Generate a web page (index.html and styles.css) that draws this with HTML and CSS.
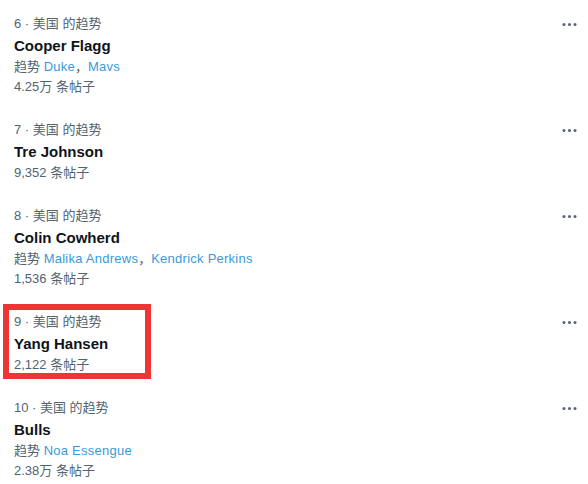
FILE: index.html
```html
<!DOCTYPE html>
<html lang="zh-CN">
<head>
  <meta charset="UTF-8">
  <title>趋势</title>
  <link rel="stylesheet" href="styles.css">
</head>
<body>

<div class="trend-list">
  <!-- 6 -->
  <div class="trend">
    <div class="trend-body">
      <div class="meta">6 · 美国 的趋势</div>
      <div class="name">Cooper Flagg</div>
      <div class="related">趋势 <a>Duke</a>，<a>Mavs</a></div>
      <div class="count">4.25万 条帖子</div>
    </div>
    <button class="more"><svg viewBox="0 0 24 24"><path d="M3 12c0-1.1.9-2 2-2s2 .9 2 2-.9 2-2 2-2-.9-2-2zm9 2c1.1 0 2-.9 2-2s-.9-2-2-2-2 .9-2 2 .9 2 2 2zm7 0c1.1 0 2-.9 2-2s-.9-2-2-2-2 .9-2 2 .9 2 2 2z"/></svg></button>
  </div>

  <!-- 7 -->
  <div class="trend">
    <div class="trend-body">
      <div class="meta">7 · 美国 的趋势</div>
      <div class="name">Tre Johnson</div>
      <div class="count">9,352 条帖子</div>
    </div>
    <button class="more"><svg viewBox="0 0 24 24"><path d="M3 12c0-1.1.9-2 2-2s2 .9 2 2-.9 2-2 2-2-.9-2-2zm9 2c1.1 0 2-.9 2-2s-.9-2-2-2-2 .9-2 2 .9 2 2 2zm7 0c1.1 0 2-.9 2-2s-.9-2-2-2-2 .9-2 2 .9 2 2 2z"/></svg></button>
  </div>

  <!-- 8 -->
  <div class="trend">
    <div class="trend-body">
      <div class="meta">8 · 美国 的趋势</div>
      <div class="name">Colin Cowherd</div>
      <div class="related">趋势 <a>Malika Andrews</a>，<a>Kendrick Perkins</a></div>
      <div class="count">1,536 条帖子</div>
    </div>
    <button class="more"><svg viewBox="0 0 24 24"><path d="M3 12c0-1.1.9-2 2-2s2 .9 2 2-.9 2-2 2-2-.9-2-2zm9 2c1.1 0 2-.9 2-2s-.9-2-2-2-2 .9-2 2 .9 2 2 2zm7 0c1.1 0 2-.9 2-2s-.9-2-2-2-2 .9-2 2 .9 2 2 2z"/></svg></button>
  </div>

  <!-- 9, marked -->
  <div class="trend marked">
    <div class="trend-body">
      <div class="meta">9 · 美国 的趋势</div>
      <div class="name">Yang Hansen</div>
      <div class="count">2,122 条帖子</div>
    </div>
    <button class="more"><svg viewBox="0 0 24 24"><path d="M3 12c0-1.1.9-2 2-2s2 .9 2 2-.9 2-2 2-2-.9-2-2zm9 2c1.1 0 2-.9 2-2s-.9-2-2-2-2 .9-2 2 .9 2 2 2zm7 0c1.1 0 2-.9 2-2s-.9-2-2-2-2 .9-2 2 .9 2 2 2z"/></svg></button>
    <div class="highlight"></div>
  </div>

  <!-- 10 -->
  <div class="trend">
    <div class="trend-body">
      <div class="meta">10 · 美国 的趋势</div>
      <div class="name">Bulls</div>
      <div class="related">趋势 <a>Noa Essengue</a></div>
      <div class="count">2.38万 条帖子</div>
    </div>
    <button class="more"><svg viewBox="0 0 24 24"><path d="M3 12c0-1.1.9-2 2-2s2 .9 2 2-.9 2-2 2-2-.9-2-2zm9 2c1.1 0 2-.9 2-2s-.9-2-2-2-2 .9-2 2 .9 2 2 2zm7 0c1.1 0 2-.9 2-2s-.9-2-2-2-2 .9-2 2 .9 2 2 2z"/></svg></button>
  </div>
</div>

</body>
</html>
```

FILE: styles.css
```css
body {
  margin: 0;
  padding: 0;
  background-color: #ffffff;
  color: #0f1419;
  font-family: "Liberation Sans", "Noto Sans CJK SC", sans-serif;
}

.trend-list {
  padding-top: 2px;
}

.trend {
  position: relative;
  display: flex;
  justify-content: space-between;
  align-items: flex-start;
  padding: 12px 9px 11px 14px;
}

.trend-body {
  display: flex;
  flex-direction: column;
}

.meta,
.related,
.count {
  font-size: 13px;
  line-height: 20px;
  color: #536471;
}

.name {
  font-size: 15px;
  font-weight: bold;
  line-height: 23px;
  color: #0f1419;
}

.related a {
  color: #3a9ad9;
  text-decoration: none;
  letter-spacing: 0.25px;
}

.more {
  border: none;
  background: transparent;
  padding: 0;
  margin-top: 1px;
  width: 19px;
  height: 19px;
  cursor: pointer;
}

.more svg {
  width: 19px;
  height: 19px;
  fill: #5b6670;
  display: block;
}

.highlight {
  position: absolute;
  left: 3px;
  top: 4px;
  width: 136px;
  height: 63px;
  border: 6px solid #ee3535;
}
```
